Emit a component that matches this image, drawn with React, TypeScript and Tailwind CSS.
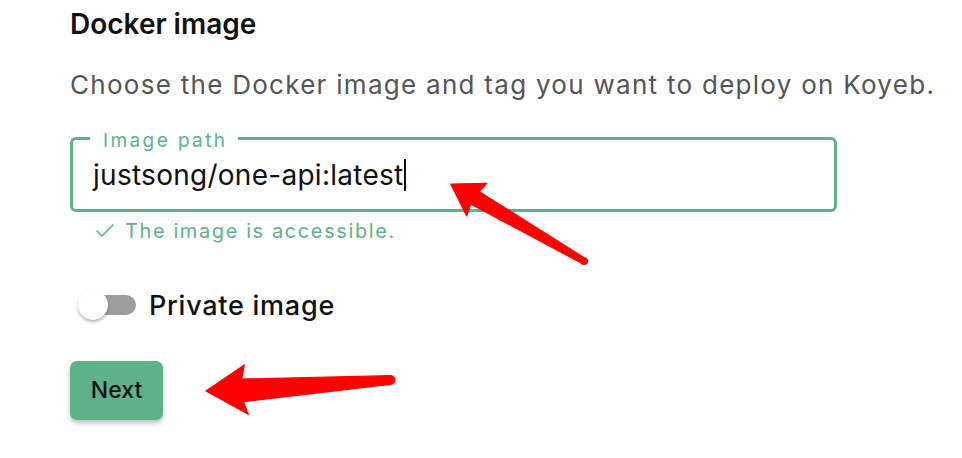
import { Check } from "lucide-react";

const GREEN = "#5eb28a";

function Arrows() {
  return (
    <svg
      className="pointer-events-none absolute left-0 top-0"
      width={962}
      height={458}
      viewBox="0 0 962 458"
    >
      <g fill="#ff0000" stroke="#ff0000" strokeWidth={1.2} strokeLinejoin="round">
        <polygon points="450.7,184 486.7,183.3 479.3,191.7 586.7,259.3 581.7,263.3 470.7,204 466.7,216" />
        <circle cx={584.2} cy={261.3} r={3.2} />
        <polygon points="206,391 244.3,365 241.7,379 390,375.7 390,384.3 243.3,401.7 248.3,414.3" />
        <circle cx={390.5} cy={380} r={4.3} />
      </g>
    </svg>
  );
}

function Toggle() {
  return (
    <div className="relative flex h-[32px] w-[58px] items-center">
      <div className="ml-[2px] h-[20px] w-[56px] rounded-full bg-[#9e9e9e]" />
      <div className="absolute left-0 top-[1px] h-[30px] w-[30px] rounded-full bg-white shadow-[0_2px_3px_rgba(0,0,0,0.3)]" />
    </div>
  );
}

export default function App() {
  return (
    <div className="relative h-[458px] w-[962px] overflow-hidden bg-white font-['Inter',sans-serif]">
      <div className="flex flex-col pl-[70px]">
        <h2 className="mt-[10px] text-[28px] font-semibold leading-[28px] text-[#111]">
          Docker image
        </h2>
        <p className="mt-[34px] text-[26px] leading-[26px] tracking-[1.28px] text-[#555]">
          Choose the Docker image and tag you want to deploy on Koyeb.
        </p>

        <div
          className="relative mt-[39px] flex h-[75px] w-[767px] items-center rounded-[6px] border-[3px] pl-[20px]"
          style={{ borderColor: GREEN }}
        >
          <span className="absolute left-[17px] top-[-9px] bg-white pl-[13px] pr-[11px] text-[19px] leading-[19px] tracking-[2.4px] text-[#5eb28a]">
            Image path
          </span>
          <span className="flex items-center text-[28px] leading-[28px] tracking-[0.27px] text-[#111]">
            justsong/one-api:latest
            <span className="inline-block h-[32px] w-[2px] bg-[#111]" />
          </span>
        </div>

        <div className="mt-[7px] flex items-center gap-[8px] pl-[23px] text-[20px] leading-[20px] tracking-[1.6px] text-[#5eb28a]">
          <Check size={24} strokeWidth={1.7} />
          <span>The image is accessible.</span>
        </div>

        <div className="mt-[46px] flex items-center gap-[13px] pl-[8px]">
          <Toggle />
          <span className="text-[27px] font-medium leading-[27px] tracking-[0.75px] text-[#111]">
            Private image
          </span>
        </div>

        <button
          type="button"
          className="mt-[40px] flex h-[59px] w-[93px] items-center justify-center rounded-[7px] bg-[#5eb28a] text-[23px] font-medium leading-[23px] text-[#111] shadow-[0_3px_5px_rgba(0,0,0,0.25)]"
        >
          Next
        </button>
      </div>
      <Arrows />
    </div>
  );
}
